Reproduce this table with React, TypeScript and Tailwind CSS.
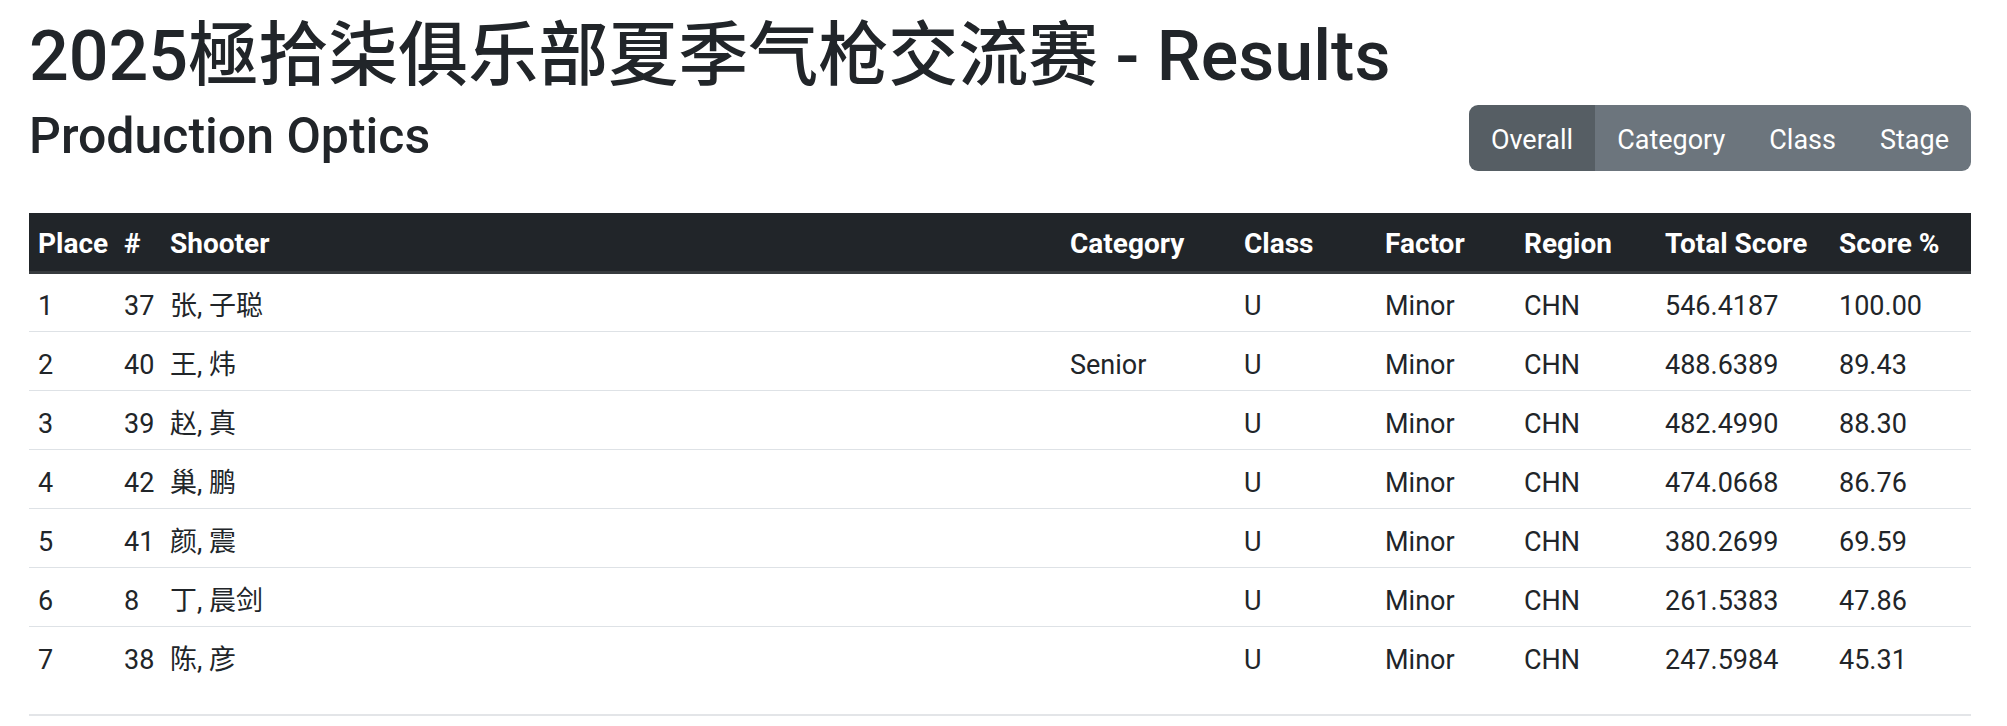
import React from "react";

const results = [
  { place: 1, num: 37, name: "张, 子聪", category: "", cls: "U", factor: "Minor", region: "CHN", total: "546.4187", pct: "100.00" },
  { place: 2, num: 40, name: "王, 炜", category: "Senior", cls: "U", factor: "Minor", region: "CHN", total: "488.6389", pct: "89.43" },
  { place: 3, num: 39, name: "赵, 真", category: "", cls: "U", factor: "Minor", region: "CHN", total: "482.4990", pct: "88.30" },
  { place: 4, num: 42, name: "巢, 鹏", category: "", cls: "U", factor: "Minor", region: "CHN", total: "474.0668", pct: "86.76" },
  { place: 5, num: 41, name: "颜, 震", category: "", cls: "U", factor: "Minor", region: "CHN", total: "380.2699", pct: "69.59" },
  { place: 6, num: 8, name: "丁, 晨剑", category: "", cls: "U", factor: "Minor", region: "CHN", total: "261.5383", pct: "47.86" },
  { place: 7, num: 38, name: "陈, 彦", category: "", cls: "U", factor: "Minor", region: "CHN", total: "247.5984", pct: "45.31" },
];

const tabs = ["Overall", "Category", "Class", "Stage"];

export default function App() {
  return (
    <div className="min-h-screen bg-white text-[#212529] font-['Roboto','Noto_Sans_CJK_SC',sans-serif]">
      <div className="ml-[29px] w-[1942px] pt-[14px]">
        <h1 className="text-[70px] leading-[84px] font-medium mb-[8px]">
          2025極拾柒俱乐部夏季气枪交流赛 - Results
        </h1>

        <div className="flex justify-between items-start">
          <h2 className="text-[50px] leading-[60px] font-medium">Production Optics</h2>
          {/* tabs */}
          <div className="flex -mt-[1px] rounded-[9px] overflow-hidden">
            {tabs.map((t, i) => (
              <button
                key={t}
                className={
                  "h-[66px] px-[22px] pt-[4px] text-[27px] text-white leading-none " +
                  (i === 0 ? "bg-[#565e64]" : "bg-[#6c757d]")
                }
              >
                {t}
              </button>
            ))}
          </div>
        </div>

        <table className="w-full table-fixed border-collapse mt-[42px] text-[27px]">
          <colgroup>
            <col className="w-[86px]" />
            <col className="w-[46px]" />
            <col className="w-[900px]" />
            <col className="w-[174px]" />
            <col className="w-[141px]" />
            <col className="w-[139px]" />
            <col className="w-[141px]" />
            <col className="w-[174px]" />
            <col className="w-[141px]" />
          </colgroup>
          <thead>
            <tr className="bg-[#212529] text-white text-[28px] border-b-[3px] border-[#373b3e]">
              <th className="h-[59px] px-[9px] pt-[5px] text-left font-bold">Place</th>
              <th className="h-[59px] px-[9px] pt-[5px] text-left font-bold">#</th>
              <th className="h-[59px] px-[9px] pt-[5px] text-left font-bold">Shooter</th>
              <th className="h-[59px] px-[9px] pt-[5px] text-left font-bold">Category</th>
              <th className="h-[59px] px-[9px] pt-[5px] text-left font-bold">Class</th>
              <th className="h-[59px] px-[9px] pt-[5px] text-left font-bold">Factor</th>
              <th className="h-[59px] px-[9px] pt-[5px] text-left font-bold">Region</th>
              <th className="h-[59px] px-[9px] pt-[5px] text-left font-bold">Total Score</th>
              <th className="h-[59px] px-[9px] pt-[5px] text-left font-bold">Score %</th>
            </tr>
          </thead>
          <tbody>
            {results.map((r, i) => (
              <tr key={r.place} className={i < results.length - 1 ? "border-b border-[#dee2e6]" : ""}>
                <td className="h-[59px] px-[9px] pt-[9px]">{r.place}</td>
                <td className="h-[59px] px-[9px] pt-[9px]">{r.num}</td>
                <td className="h-[59px] px-[9px] pt-[9px]">{r.name}</td>
                <td className="h-[59px] px-[9px] pt-[9px]">{r.category}</td>
                <td className="h-[59px] px-[9px] pt-[9px]">{r.cls}</td>
                <td className="h-[59px] px-[9px] pt-[9px]">{r.factor}</td>
                <td className="h-[59px] px-[9px] pt-[9px]">{r.region}</td>
                <td className="h-[59px] px-[9px] pt-[9px]">{r.total}</td>
                <td className="h-[59px] px-[9px] pt-[9px]">{r.pct}</td>
              </tr>
            ))}
          </tbody>
        </table>
        <div className="h-[31px] border-b-2 border-[#e3e5e8]" />
      </div>
    </div>
  );
}
